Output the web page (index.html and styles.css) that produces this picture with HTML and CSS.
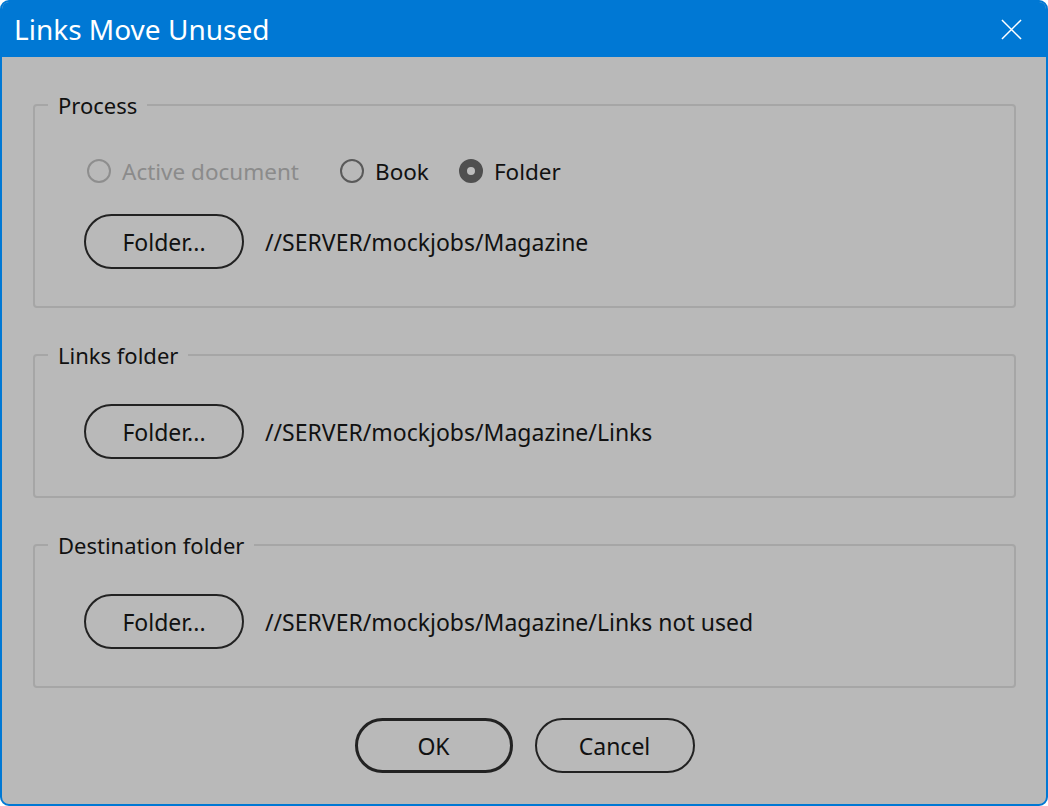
FILE: index.html
```html
<!DOCTYPE html>
<html>
<head>
	<link rel="stylesheet" href="styles.css">
</head>
<body>
	<div class="window">
		<div class="titleBar">
			<span class="title">Links Move Unused</span>
			<svg class="close" width="22" height="22" viewBox="0 0 22 22">
				<path d="M1 1 L21 21 M21 1 L1 21" stroke="#fff" stroke-width="1.6" fill="none"/>
			</svg>
		</div>

		<div class="content">
			<fieldset class="group groupProcess">
				<legend>Process</legend>
				<div class="radioRow">
					<label class="radio disabled"><span class="dot"></span>Active document</label>
					<label class="radio"><span class="dot"></span>Book</label>
					<label class="radio checked"><span class="dot"></span>Folder</label>
				</div>
				<div class="folderRow">
					<button class="btn">Folder...</button>
					<span class="path">//SERVER/mockjobs/Magazine</span>
				</div>
			</fieldset>

			<fieldset class="group">
				<legend>Links folder</legend>
				<div class="folderRow">
					<button class="btn">Folder...</button>
					<span class="path">//SERVER/mockjobs/Magazine/Links</span>
				</div>
			</fieldset>

			<fieldset class="group">
				<legend>Destination folder</legend>
				<div class="folderRow">
					<button class="btn">Folder...</button>
					<span class="path">//SERVER/mockjobs/Magazine/Links not used</span>
				</div>
			</fieldset>

			<div class="actions">
				<button class="btn default">OK</button>
				<button class="btn">Cancel</button>
			</div>
		</div>
	</div>
</body>
</html>
```

FILE: styles.css
```css
* {
	box-sizing: border-box;
}

body {
	margin: 0;
	background: #fff;
	font-family: "Noto Sans", "Open Sans", sans-serif;
	color: #111;
}

.window {
	width: 1048px;
	height: 806px;
	border: 2px solid #0078d4;
	border-radius: 9px;
	background: #b9b9b9;
	overflow: hidden;
}

.titleBar {
	height: 55px;
	background: #0078d4;
	display: flex;
	align-items: center;
	justify-content: space-between;
	padding: 0 24px 0 12px;
}

.title {
	color: #fff;
	font-size: 28px;
	margin-top: -1px;
}

.close {
	width: 21px;
	height: 21px;
}

.content {
	padding: 36px 30px 0 31px;
}

.group {
	margin: 0 0 35px 0;
	padding: 0 0 37px 0;
	border: 2px solid #a6a6a6;
	border-radius: 4px;
	min-width: 0;
}

.group legend {
	margin-left: 13px;
	padding: 0 10px;
	font-size: 22px;
	line-height: 24px;
}

.radioRow {
	display: flex;
	align-items: center;
	margin: 41px 0 0 49px;
	height: 26px;
}

.radio {
	display: flex;
	align-items: center;
	font-size: 22.5px;
	color: #111;
	margin-right: 38px;
}

.radio:nth-child(2) {
	margin-right: 27px;
}

.radio .dot {
	width: 24px;
	height: 24px;
	border: 2px solid #5a5a5a;
	border-radius: 50%;
	margin-right: 11px;
	margin-left: 3px;
}

.radio.disabled {
	color: #8b8b8b;
}

.radio.disabled .dot {
	border-color: #8e8e8e;
}

.radio.checked .dot {
	border: 8px solid #4f4f4f;
	background: #bdbdbd;
}

.folderRow {
	display: flex;
	align-items: center;
	margin: 37px 0 0 49px;
}

.groupProcess .folderRow {
	margin-top: 30px;
}

.btn {
	width: 160px;
	height: 55px;
	border: 2px solid #222;
	border-radius: 28px;
	background: transparent;
	font-family: "Noto Sans", "Open Sans", sans-serif;
	font-size: 23px;
	color: #111;
	padding: 0;
}

.btn.default {
	border-width: 3px;
	width: 158px;
}

.path {
	margin-left: 21px;
	font-size: 23px;
}

.actions {
	display: flex;
	justify-content: center;
	gap: 22px;
	margin-top: -5px;
}
```
